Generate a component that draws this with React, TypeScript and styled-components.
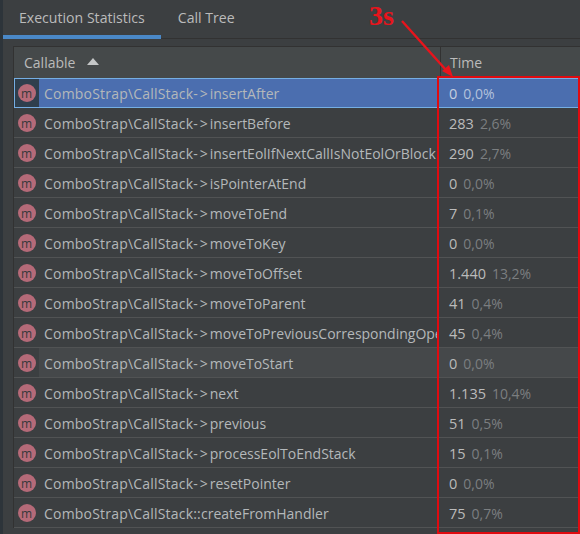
import { createGlobalStyle } from "styled-components";
import styled from "styled-components";

interface Call {
  sep: string;
  method: string;
  time: string;
  pct: string;
}

const calls: Call[] = [
  { sep: "->", method: "insertAfter", time: "0", pct: "0,0%" },
  { sep: "->", method: "insertBefore", time: "283", pct: "2,6%" },
  { sep: "->", method: "insertEolIfNextCallIsNotEolOrBlock", time: "290", pct: "2,7%" },
  { sep: "->", method: "isPointerAtEnd", time: "0", pct: "0,0%" },
  { sep: "->", method: "moveToEnd", time: "7", pct: "0,1%" },
  { sep: "->", method: "moveToKey", time: "0", pct: "0,0%" },
  { sep: "->", method: "moveToOffset", time: "1.440", pct: "13,2%" },
  { sep: "->", method: "moveToParent", time: "41", pct: "0,4%" },
  { sep: "->", method: "moveToPreviousCorrespondingOpeningCall", time: "45", pct: "0,4%" },
  { sep: "->", method: "moveToStart", time: "0", pct: "0,0%" },
  { sep: "->", method: "next", time: "1.135", pct: "10,4%" },
  { sep: "->", method: "previous", time: "51", pct: "0,5%" },
  { sep: "->", method: "processEolToEndStack", time: "15", pct: "0,1%" },
  { sep: "->", method: "resetPointer", time: "0", pct: "0,0%" },
  { sep: "::", method: "createFromHandler", time: "75", pct: "0,7%" },
];

const App = () => {
  return (
    <>
      <GlobalStyle />
      <Page>
        <Tabs>
          <Tab $active>Execution Statistics</Tab>
          <Tab>Call Tree</Tab>
        </Tabs>
        <Table>
          <Header>
            <CallableHead>
              Callable <SortUp />
            </CallableHead>
            <TimeHead>Time</TimeHead>
          </Header>
          {calls.map((item: Call, index: number) => (
            <Row key={index} $selected={index === 0} $hover={index === 9}>
              <IconCell $selected={index === 0}>
                <MethodIcon>m</MethodIcon>
              </IconCell>
              <NameCell>
                <ClassName>ComboStrap\CallStack</ClassName>
                <Separator $arrow={item.sep === "->"}>{item.sep}</Separator>
                {item.method}
              </NameCell>
              <TimeCell $selected={index === 0}>
                <span>{item.time}</span>
                <Pct $selected={index === 0}>{item.pct}</Pct>
              </TimeCell>
            </Row>
          ))}
        </Table>
        <Highlight />
        <Note>3s</Note>
        <Arrow width="60" height="60" viewBox="0 0 60 60">
          <line x1="1" y1="1" x2="45" y2="50" stroke="#e8141c" strokeWidth="2.4" />
          <polygon points="52,57 41,51 48,45" fill="#e8141c" />
        </Arrow>
      </Page>
    </>
  );
};

export default App;

const GlobalStyle = createGlobalStyle`
  html, body {
    margin: 0;
    padding: 0;
    background: #3c3f41;
  }
`;

const Page = styled("div")`
  position: relative;
  width: 580px;
  height: 534px;
  box-sizing: border-box;
  overflow: hidden;
  border-left: 3px solid #2d343a;
  background: #3c3f41;
  font-family: "Open Sans", "Noto Sans", sans-serif;
  font-size: 14px;
  color: #bbbbbb;
`;

const Tabs = styled("div")`
  display: flex;
  gap: 1px;
  height: 38px;
  border-bottom: 1px solid #323232;
  margin-bottom: 7px;
`;

const Tab = styled("div")<{ $active?: boolean }>`
  display: flex;
  align-items: center;
  height: 35px;
  padding: 0 16px;
  border-bottom: ${(props) => (props.$active ? "4px solid #4a88c7" : "none")};
  font-size: 14.1px;
  color: #bbbbbb;
`;

const Table = styled("div")`
  margin-left: 10px;
  border-left: 1px solid #323232;
  border-top: 1px solid #323232;
`;

const Header = styled("div")`
  display: flex;
  height: 31px;
  background: #45494a;
`;

const CallableHead = styled("div")`
  display: flex;
  align-items: center;
  gap: 12px;
  width: 427px;
  box-sizing: border-box;
  padding-left: 10px;
  border-right: 1px solid #323232;
`;

const TimeHead = styled("div")`
  display: flex;
  align-items: center;
  padding-left: 9px;
`;

const SortUp = styled("span")`
  width: 0;
  height: 0;
  border-left: 6px solid transparent;
  border-right: 6px solid transparent;
  border-bottom: 7px solid #c4c6c7;
  margin-bottom: 3px;
`;

const Row = styled("div")<{ $selected?: boolean; $hover?: boolean }>`
  display: flex;
  align-items: center;
  height: 30px;
  box-sizing: border-box;
  border-bottom: 1px solid #515354;
  background: ${(props) => (props.$selected ? "#4b6eaf" : props.$hover ? "#45484a" : "#3c3f41")};
  outline: ${(props) => (props.$selected ? "1px solid #75aee3" : "none")};
  outline-offset: -1px;
  white-space: nowrap;
`;

const IconCell = styled("div")<{ $selected?: boolean }>`
  display: flex;
  align-items: center;
  justify-content: center;
  flex: none;
  width: 25px;
  height: 100%;
  background: ${(props) => (props.$selected ? "#2f3f4d" : "#3c3f41")};
`;

const MethodIcon = styled("div")`
  display: flex;
  align-items: center;
  justify-content: center;
  width: 18px;
  height: 18px;
  margin-top: 1px;
  border-radius: 50%;
  background: #b56a78;
  color: #35383a;
  font-size: 12px;
  line-height: 15px;
`;

const NameCell = styled("div")`
  flex: none;
  width: 398px;
  box-sizing: border-box;
  padding: 2px 0 0 5px;
  overflow: hidden;
  color: #b4b8ba;
`;

const ClassName = styled("span")`
  letter-spacing: 0.2px;
`;

const Separator = styled("span")<{ $arrow?: boolean }>`
  letter-spacing: ${(props) => (props.$arrow ? "2px" : "0.2px")};
`;

const TimeCell = styled("div")<{ $selected?: boolean }>`
  display: flex;
  gap: 6px;
  padding: 2px 0 0 12px;
  font-size: 14.5px;
  color: ${(props) => (props.$selected ? "#c6cfdf" : "#bbbbbb")};
`;

const Pct = styled("span")<{ $selected?: boolean }>`
  font-size: 14px;
  color: ${(props) => (props.$selected ? "#b3c2dc" : "#7b7e80")};
`;

const Highlight = styled("div")`
  position: absolute;
  left: 434px;
  top: 76px;
  width: 143px;
  height: 458px;
  box-sizing: border-box;
  border: 2px solid #e00b10;
  pointer-events: none;
`;

const Note = styled("div")`
  position: absolute;
  left: 366px;
  top: 0;
  font-family: "Liberation Serif", serif;
  font-size: 28px;
  font-weight: bold;
  color: #e8141c;
`;

const Arrow = styled("svg")`
  position: absolute;
  left: 398px;
  top: 20px;
`;
